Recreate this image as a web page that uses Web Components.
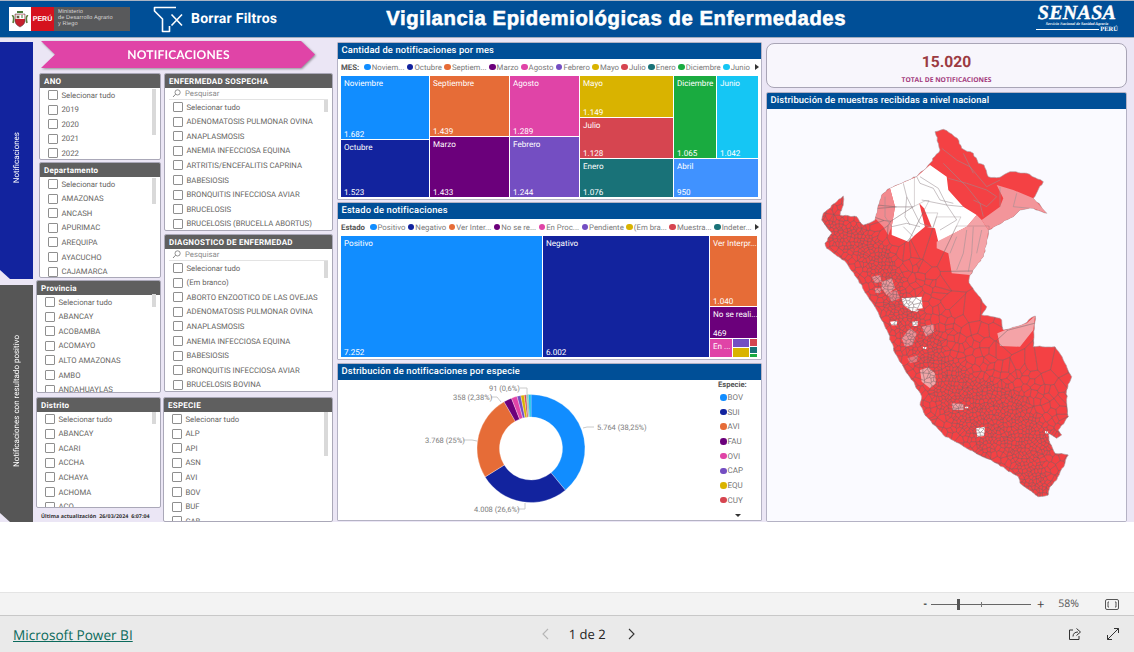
<!DOCTYPE html>
<html lang="es"><head><meta charset="utf-8"><title>Vigilancia</title>
<style>
html,body{margin:0;padding:0;background:#fff;overflow:hidden}
bi-app{font-family:Roboto,"Open Sans",sans-serif;text-rendering:geometricPrecision}
</style></head><body>
<bi-app></bi-app>
<script>
function def(name,css,html,init){
  const t=document.createElement('template');
  t.innerHTML='<style>'+css+'</style>'+html;
  customElements.define(name,class extends HTMLElement{
    constructor(){super();this.attachShadow({mode:'open'}).appendChild(t.content.cloneNode(true));}
    connectedCallback(){if(init&&!this._d){this._d=1;init.call(this,this.shadowRoot);}}
  });
}
const esc=s=>String(s).replace(/&/g,'&amp;').replace(/</g,'&lt;');

def('bi-option',`:host{display:flex;align-items:center;height:14.55px;flex:none;font:7.75px Roboto,sans-serif;color:#66645f;white-space:nowrap}
i{width:8px;height:8px;border:1px solid #8f8f8f;border-radius:1px;margin-right:3.5px;flex:none;background:#fff}`,`<i></i><slot></slot>`);

def('bi-slicer',`:host{display:flex;flex-direction:column;background:#fff;border:1px solid #aaa8b8;border-radius:2px;box-sizing:border-box;overflow:hidden;position:relative}
header{height:14px;background:#5f5f5f;color:#fff;font:700 8px Roboto,sans-serif;letter-spacing:.25px;padding:0 4px;display:flex;align-items:center;flex:none;white-space:nowrap}
.s{display:none;height:11px;margin:0 4px 0 4px;border-bottom:1px solid #e3e3e3;font:7.75px Roboto,sans-serif;color:#8a8a8a;align-items:center;gap:4px;padding-left:3px;flex:none}
:host([search]) .s{display:flex}
.l{flex:1;overflow:hidden;padding:0 0 0 8px;display:flex;flex-direction:column;min-height:0}
b{position:absolute;right:4px;width:4px;background:#d9d9d9}
svg{width:9px;height:9px;flex:none}`,
`<header id="h"></header><div class="s"><svg viewBox="0 0 9 9"><circle cx="5.6" cy="3.4" r="2.6" fill="none" stroke="#777" stroke-width=".8"/><path d="M3.6 5.2 1 8" stroke="#777" stroke-width=".9"/></svg>Pesquisar</div><div class="l"><slot></slot></div><b id="t"></b>`,
function(r){r.getElementById('h').textContent=this.getAttribute('heading');
 const [a,b]=(this.getAttribute('thumb')||'0,0').split(',');const t=r.getElementById('t');t.style.top=a+'px';t.style.height=b+'px';});

def('side-tab',`:host{display:flex;align-items:center;justify-content:center;width:33px;box-sizing:border-box;padding-bottom:5px;color:#fff;font:8px Roboto,sans-serif;clip-path:polygon(0 0,100% 0,100% 100%,10px 100%,0 calc(100% - 9px))}
span{writing-mode:vertical-rl;transform:rotate(180deg);white-space:nowrap}`,`<span><slot></slot></span>`);

def('pink-banner',`:host{display:block;filter:drop-shadow(1px 1px 1px rgba(70,70,70,.55))}
div{height:27px;background:#e044a7;color:#fff;font:700 12px Lato,"Open Sans",sans-serif;letter-spacing:.2px;display:flex;align-items:center;justify-content:center;clip-path:polygon(0 0,260px 0,274px 50%,260px 100%,0 100%,14px 50%);width:275px}`,`<div><slot></slot></div>`);

def('bi-card',`:host{display:flex;flex-direction:column;background:#fff;border:1px solid #b4b2c4;box-sizing:border-box;border-radius:1px;overflow:hidden}
header{height:16px;box-sizing:border-box;padding:0 3.5px 1px;background:#004f97;color:#fff;font:500 9.4px Roboto,sans-serif;letter-spacing:.12px;display:flex;align-items:center;flex:none;white-space:nowrap}
main{flex:1;min-height:0;display:flex;flex-direction:column;position:relative}`,`<header id="h"></header><main><slot></slot></main>`,
function(r){r.getElementById('h').textContent=this.getAttribute('heading');});

def('bi-legend',`:host{display:flex;align-items:center;height:16px;padding:0 3px;font:7.8px Roboto,sans-serif;color:#7a7a7a;white-space:nowrap;overflow:hidden;position:relative;flex:none}
b{color:#555;font-weight:700;margin-right:var(--m,5px)}
span{display:inline-flex;align-items:center;margin-right:var(--g,2.5px)}
i{width:6.5px;height:6.5px;border-radius:50%;margin-right:1px}
u{position:absolute;right:2px;top:5px;width:0;height:0;border-left:4px solid #333;border-top:3px solid transparent;border-bottom:3px solid transparent}`,``,
function(r){const c=this.getAttribute('colors').split(',');const n=this.getAttribute('items').split('|');
 let h='<b>'+esc(this.getAttribute('label'))+'</b>';n.forEach((x,i)=>h+=`<span><i style="background:${c[i]}"></i>${esc(x)}</span>`);
 r.innerHTML+=h+'<u></u>';});

def('tm-g',`:host{display:flex;gap:1px;min-width:0;min-height:0}:host([col]){flex-direction:column}`,`<slot></slot>`);
def('tm-c',`:host{display:flex;flex-direction:column;justify-content:space-between;color:#fff;font:8.1px Roboto,sans-serif;padding:2px 0 0 3px;box-sizing:border-box;overflow:hidden;white-space:nowrap;min-width:0;min-height:0;line-height:10px}`,
`<span id="a"></span><span id="b"></span>`,function(r){r.getElementById('a').textContent=this.getAttribute('l')||'';r.getElementById('b').textContent=this.getAttribute('v')||'';
 this.style.background=this.getAttribute('c');});

def('kpi-card',`:host{display:flex;flex-direction:column;align-items:center;background:#f8f6fc;border:1px solid #a9a5b6;border-radius:8px;box-sizing:border-box}
b{font:700 15.6px Roboto,sans-serif;color:#9c3b42;margin-top:8px;line-height:20px}
span{font:700 6.7px "Open Sans",sans-serif;color:#a33a7c;margin-top:3px;line-height:9px}`,`<b>15.020</b><span>TOTAL DE NOTIFICACIONES</span>`);

def('peru-logo',`:host{display:flex;height:24px;width:121px;flex:none}
.a{width:22px;background:#fff;display:flex;align-items:center;justify-content:center}
.b{width:23px;background:#d5121e;color:#fff;font:700 7px "Liberation Sans",sans-serif;display:flex;align-items:center;justify-content:center}
.c{flex:1;background:#58595b;color:#d8d8d8;font:5.6px/6px "Liberation Sans",sans-serif;padding:2px 0 0 4px;box-sizing:border-box;letter-spacing:.1px}`,
`<div class="a"><svg width="20" height="20" viewBox="0 0 20 20"><path d="M2 7C4 6 4 11 3 14M18 7c-2-1-2 4-1 7" stroke="#5b7d3a" stroke-width="1.6" fill="none"/><path d="M5 5h10v7c0 3-3 5-5 6-2-1-5-3-5-6z" fill="#c4202c" stroke="#444" stroke-width=".5"/><path d="M5.4 5.4H10V10H5.4z" fill="#dfe7df"/><path d="M10 5.4h4.6V10H10z" fill="#fff"/><path d="M7 2h6v2H7z" fill="#4b7a3a"/><circle cx="8" cy="8" r="1.3" fill="#6a5b3e"/><path d="M12 6v3" stroke="#3d7a3d"/></svg></div><div class="b">PERÚ</div><div class="c">Ministerio<br>de Desarrollo Agrario<br>y Riego</div>`);

def('clear-filters',`:host{display:flex;align-items:center;color:#fff;font:700 14px Roboto,sans-serif;letter-spacing:.25px;white-space:nowrap}
svg{margin-right:7px;flex:none}`,
`<svg width="31" height="27" viewBox="0 0 31 27" fill="none" stroke="#fff" stroke-width="1.6"><path d="M23 1.5H1.5V5L9.5 13V25.5H16.5V20" stroke-linejoin="round"/><path d="M18.5 8.5 29 19.5M29 8.5 18.5 19.5"/></svg><slot></slot>`);

def('senasa-logo',`:host{display:flex;flex-direction:column;width:82px;flex:none;color:#fff}
b{font:italic 700 20px/16px "Liberation Serif",serif;letter-spacing:.3px;text-align:center;-webkit-text-stroke:.4px #fff}
small{font:italic 700 4px/5px "Liberation Serif",serif;text-align:center;white-space:nowrap}
div{display:flex;align-items:center;gap:1px;font:700 6.5px/8px "Liberation Serif",serif}
i{flex:1;height:1px;background:#fff}`,`<b>SENASA</b><small>Servicio Nacional de Sanidad Agraria</small><div><i></i>PERÚ</div>`);

def('bi-donut',`:host{display:block;flex:1;position:relative}
svg{position:absolute;left:0;top:0}
text{font:7.5px Roboto,sans-serif;fill:#7d7d7d}
path.l{fill:none;stroke:#c4c4c4;stroke-width:.9}
.k{position:absolute;left:380px;top:0;display:flex;flex-direction:column;font:8px Roboto,sans-serif;color:#757575}
.k b{color:#555;font-weight:700;font-size:7.6px;height:10px;line-height:10px}
.k span{display:flex;align-items:center;height:14.7px;margin-left:2px}
.k i{width:6.5px;height:6.5px;border-radius:50%;margin-right:1px}
.k u{width:0;height:0;border-top:3.5px solid #333;border-left:3.5px solid transparent;border-right:3.5px solid transparent;margin:6px 0 0 17px}`,
`<svg id="s" width="423" height="141" viewBox="337 380 423 141"></svg><div class="k" id="k"></div>`,
function(r){
 const d=[[38.25,'#118DFF'],[26.6,'#12239E'],[25,'#E66C37'],[2.38,'#6B007B'],[1.7,'#E044A7'],[1.1,'#744EC2'],[1,'#D9B300'],[.6,'#D64550'],[.2,'#197278'],[.2,'#1AAB40'],[.2,'#333'],[.77,'#15C3E8']];
 const cx=530,cy=448.5,R=54,I=31.5;let a=0,h='';
 const P=(r,t)=>[(cx+r*Math.sin(t)).toFixed(2),(cy-r*Math.cos(t)).toFixed(2)];
 const sum=d.reduce((s,x)=>s+x[0],0);
 d.forEach(x=>{const t0=a/sum*2*Math.PI;a+=x[0];const t1=a/sum*2*Math.PI;const L=t1-t0>Math.PI?1:0;
  h+=`<path d="M${P(R,t0)}A${R} ${R} 0 ${L} 1 ${P(R,t1)}L${P(I,t1)}A${I} ${I} 0 ${L} 0 ${P(I,t0)}Z" fill="${x[1]}" stroke="#fff" stroke-width=".3"/>`;});
 [['M582 428L586 427H593',596,429.5,'5.764 (38,25%)'],['M462 440H471L476 441',424,442.5,'3.768 (25%)'],['M516 509H524V503',473,511.5,'4.008 (26,6%)'],['M490 397H496L500 402',452,399.5,'358 (2,38%)'],['M519 388H526V394',488,390.5,'91 (0,6%)']]
 .forEach(l=>h+=`<path class="l" d="${l[0]}"/><text x="${l[1]}" y="${l[2]}">${l[3]}</text>`);
 r.getElementById('s').innerHTML=h;
 const n=['BOV','SUI','AVI','FAU','OVI','CAP','EQU','CUY'];
 r.getElementById('k').innerHTML='<b>Especie:</b>'+n.map((x,i)=>`<span><i style="background:${d[i][1]}"></i>${x}</span>`).join('')+'<u></u>';
});

def('peru-map',`:host{display:block;flex:1;background:#fafaff;position:relative}svg{display:block}`,
`<svg id="s" width="359" height="413" viewBox="767 109 359 413"></svg>`,
function(r){
 const z8=a=>{const o=[];for(let i=0;i<a.length;i+=2)o.push((800+a[i]/3).toFixed(1)+','+(120+a[i+1]/3).toFixed(1));return o.join(' ');};
 const z9=a=>{const o=[];for(let i=0;i<a.length;i+=2)o.push((800+a[i]/3).toFixed(1)+','+(310+a[i+1]/3).toFixed(1));return o.join(' ');};
 const H=(x,y)=>{const v=Math.sin(x*12.9898+y*78.233)*43758.5453;return v-Math.floor(v);};
 const rough=s=>{const p=s.trim().split(/\s+/).map(q=>q.split(',').map(Number));const o=[];
  p.forEach((a,i)=>{const b=p[(i+1)%p.length];const n=Math.max(1,Math.round(Math.hypot(b[0]-a[0],b[1]-a[1])/3));
   for(let k=0;k<n;k++){const x=a[0]+(b[0]-a[0])*k/n,y=a[1]+(b[1]-a[1])*k/n;const w=k?1.3:0;o.push((x+(H(x,y)-.5)*w).toFixed(1)+','+(y+(H(y,x)-.5)*w).toFixed(1));}});return o.join(' ');};
 const outline=rough(z8([405,35,430,28,455,42,472,55,485,85,520,100,535,130,552,135,565,170,600,172,630,155,680,160,730,185,712,215,700,235,722,258,740,280,700,265,660,270,640,290,565,330,560,370,550,410,510,465,507,488,530,520,560,560,545,585,600,595,605,600])
  +' '+z9([610,60,665,45,700,20,706,18,700,110,765,110,790,150,815,200,800,240,800,280,805,320,775,360,785,375,770,385,745,370,750,400,765,430,805,435,795,460,770,510,750,530,745,555,715,560,660,520,655,500,580,455,500,415,430,375,375,315,360,285,365,260,345,225,310,170,285,130,265,70,230,0])
  +' '+z8([210,540,175,480,140,430,80,385,75,370,95,340,65,300,70,280,110,245,130,228,130,255,120,285,170,290,190,315,225,300,245,225,270,205,350,170,390,130,420,90]));
 const white=z8([270,205,350,170,390,135,440,170,445,210,490,260,530,285,500,320,415,365,405,325,375,320,345,345,325,365,275,345,275,320,285,260]);
 const sliver=z8([358,250,372,265,395,322,375,322]);
 const pk1=z8([245,225,270,205,285,260,275,320,265,345,250,320,225,295,235,260]);
 const pk2=z8([590,195,640,210,700,235,740,280,700,265,660,270,640,290,565,330,545,300,600,260,610,235]);
 const pk3=z8([530,285,545,300,565,330,560,370,550,410,510,465,455,460,445,400,410,385,410,365,500,320]);
 const pk4=z9([592,70,640,50,680,40,705,18,700,60,660,110,600,108]);
 const blobs=[[z8([215,470,240,465,245,485,225,490]),'#f08d92'],[z8([245,485,275,475,285,505,260,525,245,505]),'#ee9a9e'],[z8([225,505,245,505,240,520,225,518]),'#f08d92'],[z8([260,520,290,510,300,535,275,545]),'#ea8288'],
  [z8([305,535,365,530,368,565,330,570,310,555]),'#fff'],[z9([360,180,385,172,405,190,408,220,390,235,365,215]),'#f2a6a8'],[z9([455,280,490,282,492,300,458,300]),'#f2a0a4'],[z9([528,355,555,350,552,378,532,380]),'#fff'],
  [z9([270,35,292,32,290,46,275,46]),'#fff'],[z9([336,35,354,33,352,48,338,48]),'#fff'],[z9([305,85,330,55,350,70,338,105,315,110]),'#ee9096'],[z9([365,50,400,42,402,65,378,80]),'#ee9096'],[z9([322,145,355,135,350,155,330,160]),'#e9757b'],[z9([368,110,380,112,378,118,370,116]),'#fff'],[z9([735,362,745,365,742,372,735,370]),'#fff'],[z9([495,290,505,290,505,295,495,295]),'#fff'],[z8([330,565,358,570,352,575,332,572]),'#fff']];
 const spines=[[[826,228],[860,240],[880,262],[895,300],[915,335],[935,365],[965,385],[1010,405],[1040,440]],[[965,385],[985,420],[1020,450],[1040,485]],[[930,345],[950,400],[985,440]]];
 const distSeg=(x,y,a,b)=>{const dx=b[0]-a[0],dy=b[1]-a[1];let t=((x-a[0])*dx+(y-a[1])*dy)/(dx*dx+dy*dy);t=Math.max(0,Math.min(1,t));return Math.hypot(x-a[0]-t*dx,y-a[1]-t*dy);};
 const dist=(x,y)=>{let m=1e9;for(const sp of spines)for(let i=1;i<sp.length;i++)m=Math.min(m,distSeg(x,y,sp[i-1],sp[i]));return m;};
 const seeds=[];
 const seed=(x,y,s)=>{
  if((y<232&&x>868)||(x>950&&y<292)||(x>895&&y<245)||(x>1003&&y<347&&y>305))return;
  const d=dist(x+s/2,y+s/2);const t=d<14?3.5:d<40?7:14;
  if(s>t){const q=s/2;seed(x,y,q);seed(x+q,y,q);seed(x,y+q,q);seed(x+q,y+q,q);return;}
  seeds.push([x+H(x,y)*s,y+H(y+3,x+7)*s]);
 };
 for(let x=812;x<1092;x+=28)for(let y=196;y<504;y+=28)seed(x,y,28);
 const clip=(poly,a,b,c)=>{const o=[];for(let i=0;i<poly.length;i++){const p=poly[i],q=poly[(i+1)%poly.length];const u=a*p[0]+b*p[1]-c,v=a*q[0]+b*q[1]-c;if(u<=0)o.push(p);if((u<0&&v>0)||(u>0&&v<0)){const t=u/(u-v);o.push([p[0]+t*(q[0]-p[0]),p[1]+t*(q[1]-p[1])]);}}return o;};
 let mesh='';
 for(const p of seeds){
  let poly=[[p[0]-40,p[1]-40],[p[0]+40,p[1]-40],[p[0]+40,p[1]+40],[p[0]-40,p[1]+40]];
  const nb=seeds.filter(q=>q!==p&&Math.abs(q[0]-p[0])<70&&Math.abs(q[1]-p[1])<70).map(q=>[q,Math.hypot(q[0]-p[0],q[1]-p[1])]).sort((m,n)=>m[1]-n[1]);
  for(const [q,dd] of nb){
   const rad=Math.max(...poly.map(v=>Math.hypot(v[0]-p[0],v[1]-p[1])));
   if(dd>2*rad)break;
   const a=q[0]-p[0],b=q[1]-p[1],c=a*(p[0]+q[0])/2+b*(p[1]+q[1])/2;
   poly=clip(poly,a,b,c);if(poly.length<3)break;
  }
  if(poly.length>2)mesh+='M'+poly.map(v=>v[0].toFixed(1)+' '+v[1].toFixed(1)).join('L')+'Z';
 }
 const lines=[[350,170,360,190,400,205,420,240,460,250],[360,170,415,205,440,255,470,300,420,330],[310,190,320,230,340,270,360,310,395,322],[320,230,315,290,330,315],[310,320,340,350],[275,320,320,310,360,320],[365,240,440,255,490,260],
  [425,85,470,120,510,140,560,200],[445,175,500,190,560,210,590,230],[430,130,500,200,540,250,550,290],[590,230,560,260,520,240],[490,100,520,160],[600,180,560,200],
  [650,220,640,260,690,265],[600,200,600,260],[500,330,490,400,470,450],[520,320,515,400,505,455],[470,350,450,400],[545,330,530,400],[255,230,255,290,275,320]];
 const ln=lines.map(l=>`<polyline points="${z8(l)}"/>`).join('');
 r.getElementById('s').innerHTML=`<defs><clipPath id="c"><polygon points="${outline}"/></clipPath></defs>
 <polygon points="${outline}" fill="#f44144" stroke="#a9a0a3" stroke-width=".6"/>
 <g clip-path="url(#c)">
  <polygon points="${white}" fill="#fff"/><polygon points="${sliver}" fill="#f44144"/>
  <polygon points="${pk1}" fill="#f28a8f"/><polygon points="${pk2}" fill="#f3959a"/><polygon points="${pk3}" fill="#f4a3a7"/><polygon points="${pk4}" fill="#f4a3a7"/>
  ${blobs.map(b=>`<polygon points="${b[0]}" fill="${b[1]}"/>`).join('')}
  <path d="${mesh}" fill="none" stroke="#7a686c" stroke-width=".38" stroke-opacity=".75"/>
  <g fill="none" stroke="#9a8f92" stroke-width=".55">${ln}</g>
 </g>`;
});

def('bi-header',`:host{display:flex;align-items:center;height:38px;box-sizing:border-box;background:#004f97;border-top:1px solid #a9b4c4;border-bottom:1px solid #a3adbd;padding-left:9px;position:relative;flex:none}
clear-filters{margin-left:23px}
h1{flex:none;margin:0 0 0 109px;color:#fff;font:700 20.3px "Liberation Sans",sans-serif;-webkit-text-stroke:.55px #fff;letter-spacing:.57px;white-space:nowrap}
senasa-logo{margin-left:auto;margin-right:16px}`,
`<peru-logo></peru-logo><clear-filters>Borrar Filtros</clear-filters><h1>Vigilancia Epidemiológicas de Enfermedades</h1><senasa-logo></senasa-logo>`);

def('bi-footer',`:host{display:flex;flex-direction:column;flex:none;font-family:"Open Sans",sans-serif}
.t{height:24px;box-sizing:border-box;background:#f3f3f3;border-top:1px solid #e4e4e4;border-bottom:1px solid #c8c8c8;display:flex;align-items:center;color:#444;font-size:10.5px}
.tr{width:100px;height:1px;background:#666;position:relative;margin:0 6px 0 4px}
.tr b{position:absolute;left:26px;top:-5px;width:3px;height:11px;background:#555}
.tr i{position:absolute;left:50px;top:-2px;width:1px;height:5px;background:#777}
.b{height:36px;background:#eaeaea;display:flex;align-items:center;position:relative}
a{font-size:13.6px;color:#0b6a5c;text-decoration:underline;margin-left:13px}
.p{display:flex;align-items:center;font-size:13px;color:#252423;margin-left:408px;gap:0}
.p svg{flex:none}`,
`<div class="t"><span style="margin-left:923.5px;font-weight:700">-</span><div class="tr"><b></b><i></i></div><span style="font-size:13px;line-height:10px">+</span><span style="margin-left:14px;color:#555">58%</span>
<svg style="margin-left:26px" width="14" height="11" viewBox="0 0 14 11" fill="none" stroke="#555"><rect x=".5" y=".5" width="13" height="10" rx="1.5"/><path d="M4 3H3V8H4M10 3H11V8H10"/></svg></div>
<div class="b"><a>Microsoft Power BI</a><div class="p"><svg width="10" height="12" viewBox="0 0 10 12" fill="none" stroke="#b5b5b5" stroke-width="1.1"><path d="M7 1 2 6l5 5"/></svg><span style="margin:0 20px 0 18px;font-weight:500">1 de 2</span><svg width="10" height="12" viewBox="0 0 10 12" fill="none" stroke="#333" stroke-width="1.1"><path d="M3 1l5 5-5 5"/></svg></div>
<svg style="position:absolute;left:1068px;top:11px" width="14" height="14" viewBox="0 0 14 14" fill="none" stroke="#333"><path d="M5 3H1.5V12.5H11V9M5 9.500C5 6.500 7 5 10 5M8.500 1.500 12.500 5 8.500 8.500"/></svg>
<svg style="position:absolute;left:1106px;top:11px" width="14" height="14" viewBox="0 0 14 14" fill="none" stroke="#333"><path d="M8 1.500H12.500V6M12.500 1.500 1.500 12.500M1.500 8V12.500H6"/></svg></div>`);

const C=['#118DFF','#12239E','#E66C37','#6B007B','#E044A7','#744EC2','#D9B300','#D64550','#197278','#1AAB40','#15C6F4'];
const opts=a=>a.map(x=>`<bi-option>${esc(x)}</bi-option>`).join('');
const S='Selecionar tudo';
def('bi-app',`:host{display:flex;flex-direction:column;width:1134px;height:652px;overflow:hidden;background:#fff}
.canvas{height:522px;flex:none;background:#ebe6f5;display:flex;flex-direction:column}
.white{flex:1}
.m{display:flex;flex:1;min-height:0}
.tabs{width:33px;display:flex;flex-direction:column;gap:6px;padding-top:4px;flex:none}
.tabs side-tab:first-child{height:237px;background:#12239E}
.tabs side-tab:last-child{height:237px;background:#565656}
.sl{width:297px;margin-left:3px;flex:none;display:flex;flex-direction:column}
pink-banner{margin:3px 0 5px 5px}
.cols{display:flex;flex:1;min-height:0}
.c1{width:125px;display:flex;flex-direction:column;flex:none}
.c2{width:170px;margin-left:2px;display:flex;flex-direction:column;flex:none}
.upd{font:700 5.3px "Open Sans",sans-serif;color:#333;margin:4px 0 0 5px;white-space:nowrap;letter-spacing:.05px}
.mid{width:425px;margin-left:4px;flex:none;display:flex;flex-direction:column;padding-top:4px}
.mid bi-card{height:158px;flex:none}
.r{width:361px;margin-left:4px;flex:none;display:flex;flex-direction:column;padding-top:5px}
kpi-card{height:45px;flex:none}
.r bi-card{flex:1;margin-top:4px;border-radius:2px}
bi-legend{margin-bottom:1px}
.tm{margin-left:3px;width:417px;height:121px;display:flex}
`,`<div class="canvas"><bi-header></bi-header><div class="m">
<div class="tabs"><side-tab>Notificaciones</side-tab><side-tab>Notificaciones con resultado positivo</side-tab></div>
<div class="sl"><pink-banner>NOTIFICACIONES</pink-banner><div class="cols">
<div class="c1">
<bi-slicer heading="ANO" thumb="15,46" style="height:87px;margin-left:3px">${opts([S,'2019','2020','2021','2022'])}</bi-slicer>
<bi-slicer heading="Departamento" thumb="15,26" style="height:116px;margin:2px 0 0 3px">${opts([S,'AMAZONAS','ANCASH','APURIMAC','AREQUIPA','AYACUCHO','CAJAMARCA'])}</bi-slicer>
<bi-slicer heading="Provincia" thumb="13,13" style="height:113px;margin-top:2px">${opts([S,'ABANCAY','ACOBAMBA','ACOMAYO','ALTO AMAZONAS','AMBO','ANDAHUAYLAS'])}</bi-slicer>
<bi-slicer heading="Distrito" thumb="14,12" style="height:111px;margin-top:4px">${opts([S,'ABANCAY','ACARI','ACCHA','ACHAYA','ACHOMA','ACO'])}</bi-slicer>
<div class="upd">Última actualización &nbsp;26/03/2024 &nbsp;6:07:04</div>
</div>
<div class="c2">
<bi-slicer heading="ENFERMEDAD SOSPECHA" search thumb="26,12" style="height:158px;margin-left:1px">${opts([S,'ADENOMATOSIS PULMONAR OVINA','ANAPLASMOSIS','ANEMIA INFECCIOSA EQUINA','ARTRITIS/ENCEFALITIS CAPRINA','BABESIOSIS','BRONQUITIS INFECCIOSA AVIAR','BRUCELOSIS','BRUCELOSIS (BRUCELLA ABORTUS)'])}</bi-slicer>
<bi-slicer heading="DIAGNOSTICO DE ENFERMEDAD" search thumb="26,17" style="height:158px;margin:3px 0 0 1px">${opts([S,'(Em branco)','ABORTO ENZOOTICO DE LAS OVEJAS','ADENOMATOSIS PULMONAR OVINA','ANAPLASMOSIS','ANEMIA INFECCIOSA EQUINA','BABESIOSIS','BRONQUITIS INFECCIOSA AVIAR','BRUCELOSIS BOVINA'])}</bi-slicer>
<bi-slicer heading="ESPECIE" thumb="14,44" style="height:125px;margin-top:5px">${opts([S,'ALP','API','ASN','AVI','BOV','BUF','CAB'])}</bi-slicer>
</div></div></div>
<div class="mid">
<bi-card heading="Cantidad de notificaciones por mes">
<bi-legend label="MES:" colors="${C.join(',')}" items="Noviem...|Octubre|Septiem...|Marzo|Agosto|Febrero|Mayo|Julio|Enero|Diciembre|Junio"></bi-legend>
<tm-g class="tm">
<tm-g col style="flex:0 0 88px"><tm-c l="Noviembre" v="1.682" c="${C[0]}" style="flex:0 0 63px"></tm-c><tm-c l="Octubre" v="1.523" c="${C[1]}" style="flex:1"></tm-c></tm-g>
<tm-g col style="flex:0 0 79px"><tm-c l="Septiembre" v="1.439" c="${C[2]}" style="flex:0 0 60px"></tm-c><tm-c l="Marzo" v="1.433" c="${C[3]}" style="flex:1"></tm-c></tm-g>
<tm-g col style="flex:0 0 69px"><tm-c l="Agosto" v="1.289" c="${C[4]}" style="flex:0 0 60px"></tm-c><tm-c l="Febrero" v="1.244" c="${C[5]}" style="flex:1"></tm-c></tm-g>
<tm-g col style="flex:0 0 93px"><tm-c l="Mayo" v="1.149" c="${C[6]}" style="flex:0 0 41px"></tm-c><tm-c l="Julio" v="1.128" c="${C[7]}" style="flex:0 0 40px"></tm-c><tm-c l="Enero" v="1.076" c="${C[8]}" style="flex:1"></tm-c></tm-g>
<tm-g col style="flex:1"><tm-g style="flex:0 0 82px"><tm-c l="Diciembre" v="1.065" c="${C[9]}" style="flex:0 0 42px"></tm-c><tm-c l="Junio" v="1.042" c="${C[10]}" style="flex:1"></tm-c></tm-g><tm-c l="Abril" v="950" c="#4092FF" style="flex:1"></tm-c></tm-g>
</tm-g></bi-card>
<bi-card heading="Estado de notificaciones" style="margin-top:2px">
<bi-legend label="Estado" style="--g:2.5px" colors="${C.slice(0,9).join(',')}" items="Positivo|Negativo|Ver Inter...|No se re...|En Proc...|Pendiente|(Em bra...|Muestra...|Indeter..."></bi-legend>
<tm-g class="tm" style="width:416px">
<tm-c l="Positivo" v="7.252" c="${C[0]}" style="flex:0 0 201px"></tm-c><tm-c l="Negativo" v="6.002" c="${C[1]}" style="flex:0 0 166px"></tm-c>
<tm-g col style="flex:1"><tm-c l="Ver Interpr..." v="1.040" c="${C[2]}" style="flex:0 0 70px"></tm-c><tm-c l="No se reali..." v="469" c="${C[3]}" style="flex:0 0 31px"></tm-c>
<tm-g style="flex:1"><tm-c l="En ..." c="${C[4]}" style="flex:0 0 22px"></tm-c><tm-g col style="flex:0 0 16px"><tm-c c="${C[5]}" style="flex:0 0 8px"></tm-c><tm-c c="${C[6]}" style="flex:1"></tm-c></tm-g><tm-g col style="flex:1"><tm-c c="${C[7]}" style="flex:0 0 7px"></tm-c><tm-c c="${C[8]}" style="flex:0 0 6px"></tm-c><tm-c c="${C[9]}" style="flex:1"></tm-c></tm-g></tm-g></tm-g>
</tm-g></bi-card>
<bi-card heading="Dstribución de notificaciones por especie" style="margin-top:3px"><bi-donut></bi-donut></bi-card>
</div>
<div class="r"><kpi-card></kpi-card><bi-card heading="Distribución de muestras recibidas a nivel nacional"><peru-map></peru-map></bi-card></div>
</div></div><div class="white"></div><bi-footer></bi-footer>`);
</script>
</body></html>
